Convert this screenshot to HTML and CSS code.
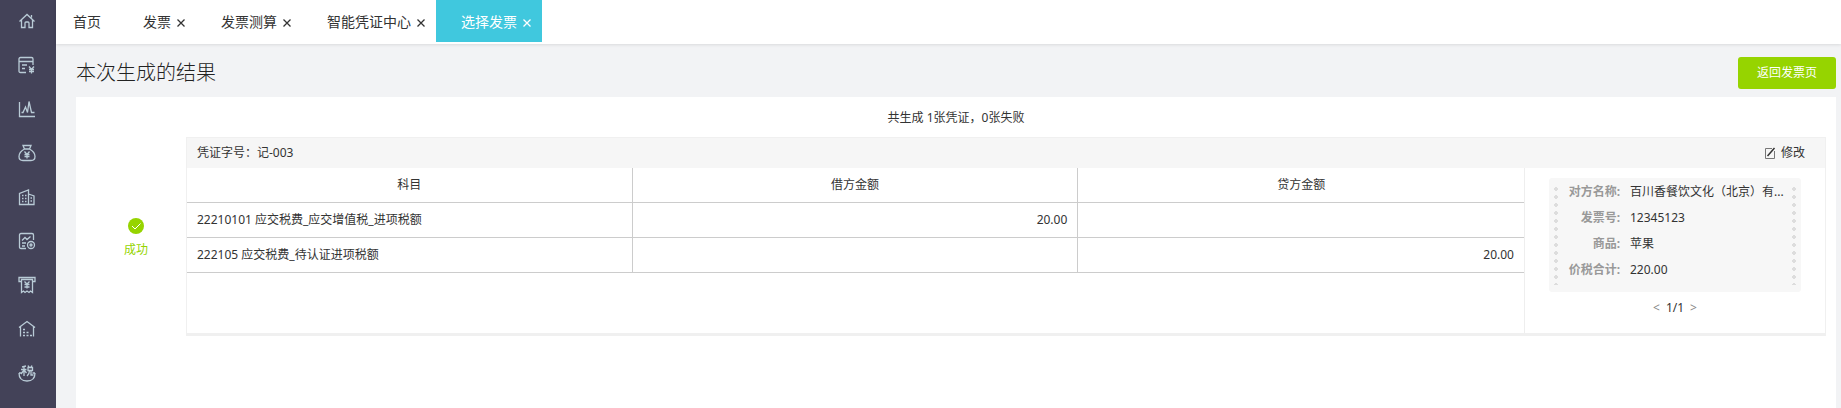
FILE: index.html
```
<!DOCTYPE html>
<html lang="zh-CN">
<head>
  <meta charset="UTF-8">
  <meta name="viewport" content="width=device-width, initial-scale=1.0">
  <title>选择发票</title>
  <link rel="stylesheet" href="styles.css">
</head>
<body>

  <nav class="sidebar">
    <a href="#" aria-label="首页">
      <svg viewBox="0 0 18 18"><path d="M1.500 9.500 9 2.500l7.500 7M3.500 8v7.500h3.500V11q0-1 1-1h2q1 0 1 1v4.500h3.500V8M13.500 3v2.500"/></svg>
    </a>
    <a href="#" aria-label="发票">
      <svg viewBox="0 0 18 18"><path d="M8 16.500H2.500q-1.500 0-1.500-1.500V3q0-1.500 1.500-1.500h11Q15 1.500 15 3v6M1 5.500h14M4 9h5M4 12.500h3M11 10.500l2.500 3 2.500-3M13.500 13.500v4M11 13.500h5M11 15.500h5"/></svg>
    </a>
    <a href="#" aria-label="报表">
      <svg viewBox="0 0 18 18"><path d="M1.500 2v14.500H17M3.500 12.500h1.500L7.500 7l2 5.500L11 1.500l2.500 11h3"/></svg>
    </a>
    <a href="#" aria-label="资金">
      <svg viewBox="0 0 18 18"><path d="M5 1.500h8L11.500 5h-5zM6.500 5Q1 8 1 12.500 1 16.500 5 16.500h8q4 0 4-4Q17 8 11.500 5M6.500 7.500l2.500 3 2.500-3M9 10.500v4M6.500 10.500h5M6.500 12.500h5"/></svg>
    </a>
    <a href="#" aria-label="资产">
      <svg viewBox="0 0 18 18"><path d="M1.500 16.500V5.500L10.500 2v14.500zM10.500 6l5.500 2v8.500h-5.500M4 7.500h1.500M7 7.500h1.500M4 10.500h1.500M7 10.500h1.500M4 13.500h1.500M7 13.500h1.500M12.500 10h1.500M12.500 13h1.500"/></svg>
    </a>
    <a href="#" aria-label="税务报表">
      <svg viewBox="0 0 18 18"><path d="M8 16.500H3q-1.500 0-1.500-1.500V3q0-1.500 1.500-1.500h11q1.500 0 1.500 1.500v5M4 8.500 7 5.500l2 2L12.500 4.500M4 11h4M4 14h3"/><circle cx="13" cy="13" r="3.500"/><circle cx="13" cy="13" r="1"/></svg>
    </a>
    <a href="#" aria-label="票据">
      <svg viewBox="0 0 18 18"><path d="M3.500 5.500H1v-4h16v4h-2.500M3.500 3.500h11v13l-2-1.500-1.500 1.500-2-1.500-2 1.500-1.500-1.500-2 1.500zM6.500 5.500l2.500 2.500 2.500-2.500M9 8v4.500M6.500 8.500h5M6.500 11h5"/></svg>
    </a>
    <a href="#" aria-label="库存">
      <svg viewBox="0 0 18 18"><path d="M1 7.500 9 1.500l8 6M2.500 6.500v10M15.500 6.500v10M5 9.500h2M5 12.500h2M8.500 12.500h2M5 15.500h2M8.500 15.500h2M12 15.500h2"/></svg>
    </a>
    <a href="#" aria-label="税">
      <svg viewBox="0 0 18 18"><path d="M1 9q0 8 8 8t8-8M1 9h2.500M14.500 9H17M4 3l4-1M3 5.500h5.500M6 2.500V12M6 6l-3 4M6 6l2.500 3M10 1.500l1 1.500M14 1.500 13 3M10 3.500h4.500v3H10zM11.500 6.500Q11.500 10 9 12M13 6.500V11h2.500"/></svg>
    </a>
  </nav>

  <div class="page">
    <header class="tabs">
      <div class="tab tab-home"><a href="#">首页</a></div>
      <div class="tab">
        <a href="#">发票</a>
        <button class="close" aria-label="关闭"><svg viewBox="0 0 8 8"><path d="M.5.5l7 7M7.500.5l-7 7"/></svg></button>
      </div>
      <div class="tab">
        <a href="#">发票测算</a>
        <button class="close" aria-label="关闭"><svg viewBox="0 0 8 8"><path d="M.5.5l7 7M7.500.5l-7 7"/></svg></button>
      </div>
      <div class="tab">
        <a href="#">智能凭证中心</a>
        <button class="close" aria-label="关闭"><svg viewBox="0 0 8 8"><path d="M.5.5l7 7M7.500.5l-7 7"/></svg></button>
      </div>
      <div class="tab active">
        <a href="#">选择发票</a>
        <button class="close" aria-label="关闭"><svg viewBox="0 0 8 8"><path d="M.5.5l7 7M7.500.5l-7 7"/></svg></button>
      </div>
    </header>

    <main class="content">
      <div class="title-bar">
        <h1>本次生成的结果</h1>
        <button class="back-button">返回发票页</button>
      </div>

      <section class="panel">
        <p class="summary">共生成 1张凭证，0张失败</p>

        <div class="result">
          <div class="status">
            <svg viewBox="0 0 16 16"><circle cx="8" cy="8" r="8"/><path d="M4 8l3 3 5.500-5.500"/></svg>
            <span>成功</span>
          </div>

          <div class="voucher">
            <div class="voucher-head">
              <span>凭证字号：记-003</span>
              <button class="edit-button">
                <svg viewBox="0 0 12 12"><path d="M8 1.500H1.500v10h9V4"/><path class="pen" d="M3.500 9 10.500 1"/></svg>
                修改
              </button>
            </div>
            <div class="voucher-body">
              <div class="entries">
                <table>
                  <thead>
                    <tr><th>科目</th><th>借方金额</th><th>贷方金额</th></tr>
                  </thead>
                  <tbody>
                    <tr><td>22210101 应交税费_应交增值税_进项税额</td><td class="amount">20.00</td><td class="amount"></td></tr>
                    <tr><td>222105 应交税费_待认证进项税额</td><td class="amount"></td><td class="amount">20.00</td></tr>
                  </tbody>
                </table>
              </div>

              <div class="invoice-side">
                <div class="invoice">
                  <dl>
                    <dt>对方名称:</dt><dd>百川香餐饮文化（北京）有...</dd>
                    <dt>发票号:</dt><dd>12345123</dd>
                    <dt>商品:</dt><dd>苹果</dd>
                    <dt>价税合计:</dt><dd>220.00</dd>
                  </dl>
                </div>
                <div class="pager">
                  <button aria-label="上一张">&lt;</button>
                  <span>1/1</span>
                  <button aria-label="下一张">&gt;</button>
                </div>
              </div>
            </div>
          </div>
        </div>
      </section>
    </main>
  </div>

</body>
</html>
```

FILE: styles.css
```
* {
  box-sizing: border-box;
}

body {
  margin: 0;
  min-height: 100vh;
  display: flex;
  background-color: #f2f3f5;
  color: #333;
  font-family: "Noto Sans", "Noto Sans CJK SC", sans-serif;
  font-size: 12px;
  line-height: 20px;
}

a {
  color: inherit;
  text-decoration: none;
}

button {
  padding: 0;
  border: none;
  background: none;
  color: inherit;
  font: inherit;
  cursor: pointer;
}

svg {
  display: block;
  fill: none;
  stroke: currentColor;
}

.sidebar {
  flex: none;
  width: 56px;
  background-color: #434258;
  color: #b9cbd6;
}

.sidebar a {
  display: flex;
  align-items: center;
  height: 44px;
  padding: 0 0 2px 18px;
}

.sidebar svg {
  width: 18px;
  height: 18px;
  stroke-width: 1.3;
}

.page {
  flex: 1;
  min-width: 0;
  display: flex;
  flex-direction: column;
}

.tabs {
  display: flex;
  height: 44px;
  background-color: #fff;
  box-shadow: 0 1px 3px rgba(0, 0, 0, 0.1);
  font-size: 14px;
}

.tab {
  display: flex;
  align-items: center;
  gap: 6px;
  height: 42px;
  padding: 2px 11px 0 25px;
}

.tab-home {
  padding: 2px 17px 0;
}

.tab.active {
  background-color: #40c8de;
  color: #fff;
}

.close {
  padding-top: 2px;
}

.close svg {
  width: 8px;
  height: 8px;
  stroke-width: 1.3;
}

.content {
  flex: 1;
  display: flex;
  flex-direction: column;
  padding: 0 5px 0 20px;
}

.title-bar {
  display: flex;
  align-items: center;
  justify-content: space-between;
  padding: 13px 0 8px;
}

h1 {
  margin: 0;
  color: #222;
  font-size: 20px;
  font-weight: 300;
  line-height: 32px;
}

.back-button {
  width: 98px;
  height: 32px;
  border-radius: 3px;
  background-color: #96d400;
  color: #fff;
}

.panel {
  flex: 1;
  background-color: #fff;
}

.summary {
  margin: 0;
  padding: 11px 0 9px;
  text-align: center;
}

.result {
  display: flex;
  padding: 0 10px;
}

.status {
  flex: none;
  width: 100px;
  display: flex;
  flex-direction: column;
  align-items: center;
  justify-content: center;
  gap: 6px;
  padding-top: 4px;
  color: #96d400;
}

.status svg {
  width: 16px;
  height: 16px;
}

.status circle {
  fill: #96d400;
  stroke: none;
}

.status path {
  stroke: #fff;
}

.voucher {
  flex: 1;
  min-width: 0;
  border: 1px solid #f0f0f0;
  border-bottom-width: 3px;
}

.voucher-head {
  display: flex;
  align-items: center;
  justify-content: space-between;
  height: 30px;
  padding: 0 20px 0 10px;
  background-color: #f6f6f6;
}

.edit-button {
  display: flex;
  align-items: center;
  gap: 5px;
}

.edit-button svg {
  width: 12px;
  height: 12px;
  stroke: #777;
}

.edit-button .pen {
  stroke: #333;
  stroke-width: 1.5;
}

.voucher-body {
  display: flex;
}

.entries {
  flex: 1;
}

table {
  width: 100%;
  table-layout: fixed;
  border-collapse: separate;
  border-spacing: 0;
}

th,
td {
  height: 35px;
  padding: 0 10px;
  border-right: 1px solid #ccc;
  border-bottom: 1px solid #ccc;
  font-weight: normal;
}

th:last-child,
td:last-child {
  border-right: none;
}

.amount {
  text-align: right;
}

.invoice-side {
  flex: none;
  width: 301px;
  padding: 10px 24px 15px;
  border-left: 1px solid #eee;
}

.invoice {
  display: flex;
  justify-content: space-between;
  padding: 7px 5px;
  border-radius: 3px;
  background-color: #f7f7f7;
}

/* 票据两侧的圆孔 */
.invoice::before,
.invoice::after {
  content: "";
  width: 4px;
  height: 100px;
  background: radial-gradient(circle, #ddd 2px, transparent 2px) 0 0 / 4px 8px;
}

dl {
  flex: 1;
  min-width: 0;
  display: grid;
  grid-template-columns: 54px 1fr;
  align-content: start;
  column-gap: 10px;
  margin: -6px 2px 0 8px;
  line-height: 26px;
}

dt {
  color: #999;
  font-weight: bold;
  text-align: right;
  white-space: nowrap;
}

dd {
  margin: 0;
  overflow: hidden;
  text-overflow: ellipsis;
  white-space: nowrap;
}

.pager {
  display: flex;
  justify-content: center;
  gap: 6px;
  padding-top: 6px;
}

.pager button {
  color: #888;
}
```
